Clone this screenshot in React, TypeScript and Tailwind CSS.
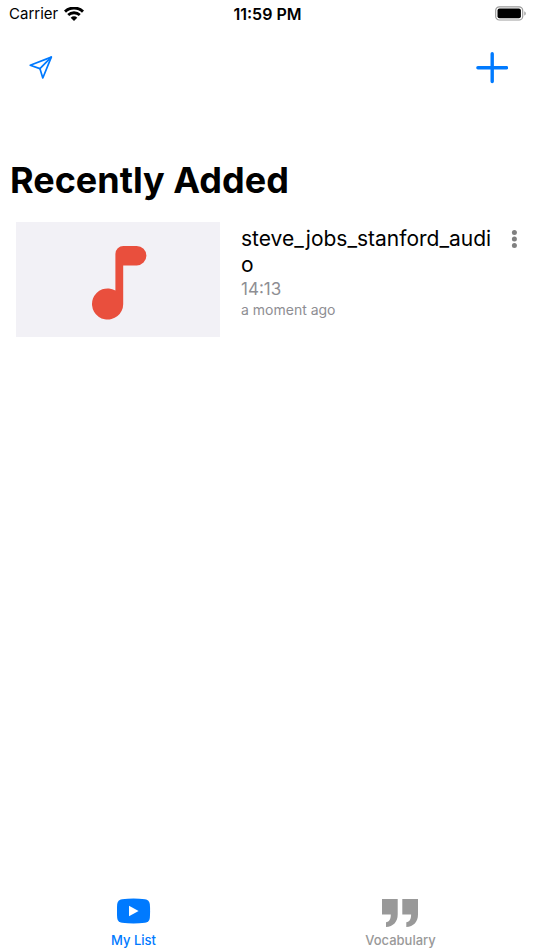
import React from "react";

type MediaItem = { title: string; duration: string; added: string };

const items: MediaItem[] = [
  { title: "steve_jobs_stanford_audio", duration: "14:13", added: "a moment ago" },
];

function StatusBar() {
  return (
    <div className="grid h-7 grid-cols-3 items-center pr-2 pl-[9px] text-[15px] leading-5 text-black">
      <div className="flex items-center gap-1.5">
        <span>Carrier</span>
        <svg width="20" height="15" viewBox="0 0 20 15" fill="none" aria-hidden="true">
          <path d="M1 4.6C6-.2 14-.2 19 4.6" stroke="#000" strokeWidth="2.9" />
          <path d="M4.2 8C7.4 5 12.6 5 15.8 8" stroke="#000" strokeWidth="2.8" />
          <path d="M6.7 10.7C8.6 8.9 11.4 8.9 13.3 10.7L10 14Z" fill="#000" />
        </svg>
      </div>
      <span className="text-center text-[16px] font-semibold">11:59 PM</span>
      <svg className="justify-self-end" width="31" height="16" viewBox="0 0 31 16" aria-hidden="true">
        <rect x=".7" y=".8" width="27" height="13.2" rx="3.6" fill="none" stroke="#9b9b9b" strokeWidth="1.2" />
        <rect x="2.5" y="2.6" width="23.4" height="9.6" rx="2" fill="#000" />
        <path d="M29.3 5.2C31.2 6.1 31.2 8.7 29.3 9.6Z" fill="#9b9b9b" />
      </svg>
    </div>
  );
}

function NavBar() {
  return (
    <header className="flex h-20 items-center justify-between px-6 text-[#007aff]">
      <button type="button" aria-label="Share" className="flex h-8 w-[34px] items-center justify-center">
        <svg width="24" height="24" viewBox="0 0 24 24" fill="none" stroke="currentColor" strokeWidth="1.7" strokeLinejoin="round" strokeLinecap="round">
          <path d="M22.3 1.1L1.2 9.3L10.9 12.6L13.8 22Z" />
          <path d="M22.3 1.1L10.9 12.6" />
        </svg>
      </button>
      <button type="button" aria-label="Add" className="flex size-9 items-center justify-center">
        <svg width="32" height="32" viewBox="0 0 32 32" fill="none" stroke="currentColor" strokeWidth="3.4" strokeLinecap="round">
          <path d="M16.2 1.8V29.6M1.9 15.7H30.5" />
        </svg>
      </button>
    </header>
  );
}

function MediaRow({ item }: { item: MediaItem }) {
  return (
    <li className="flex items-start pr-2 pl-4">
      <div className="flex h-[115px] w-[204px] shrink-0 items-center justify-center bg-[#f2f1f6]">
        <svg width="60" height="82" viewBox="-4 -7 60 82" fill="#e94f3d" aria-hidden="true">
          <path d="M23.4 8A8 8 0 0 1 31.4 0H44.7A9.7 9.7 0 0 1 44.7 19.4H31.2V58.2A15.6 15.6 0 1 1 23.4 44.5Z" />
        </svg>
      </div>
      <div className="ml-[21px] min-w-0 flex-1 pt-1">
        <h2 className="text-[21px] leading-[26px] break-all text-black">{item.title}</h2>
        <p className="text-[17px] leading-[23px] text-[#8e8e93]">{item.duration}</p>
        <p className="text-[14px] leading-[18px] text-[#8e8e93]">{item.added}</p>
      </div>
      <button type="button" aria-label="More options" className="mt-[5px] flex h-6 w-6 shrink-0 items-center justify-center">
        <svg width="6" height="18" viewBox="0 0 6 18" fill="#808080">
          <circle cx="3.4" cy="2.6" r="2.5" />
          <circle cx="3.4" cy="9" r="2.5" />
          <circle cx="3.4" cy="15.4" r="2.5" />
        </svg>
      </button>
    </li>
  );
}

function TabBar() {
  return (
    <nav className="grid h-[60px] grid-cols-2 text-[13px] leading-4 font-medium">
      <button type="button" aria-current="page" className="flex flex-col items-center text-[#007aff]">
        <span className="flex h-[42px] items-center">
          <svg width="34" height="26" viewBox="0 0 34 26" aria-hidden="true">
            <path d="M5 1.2Q16.5-.1 28 1.2Q32.3 1.7 32.8 6Q33.4 13 32.8 20Q32.3 24.3 28 24.8Q16.5 26.1 5 24.8Q.7 24.3 .2 20Q-.4 13 .2 6Q.7 1.7 5 1.2Z" fill="currentColor" />
            <path d="M12 7.8L21.6 13L12 18.2Z" fill="#fff" />
          </svg>
        </span>
        My List
      </button>
      <button type="button" className="flex flex-col items-center text-[#999999]">
        <span className="flex h-[42px] items-center pt-1">
          <svg width="38" height="28" viewBox="1 0 38 28" fill="currentColor" aria-hidden="true">
            <path d="M1 0H16.7V15.5C16.7 23 12.2 27.5 5 28V23.2C8.2 22.8 9.8 20.6 9.8 15.5H1Z" />
            <path d="M21.3 0H37V15.5C37 23 32.5 27.5 25.3 28V23.2C28.5 22.8 30.1 20.6 30.1 15.5H21.3Z" />
          </svg>
        </span>
        Vocabulary
      </button>
    </nav>
  );
}

export default function App() {
  return (
    <div className="flex min-h-screen flex-col bg-white font-['Inter','Liberation_Sans',sans-serif]">
      <StatusBar />
      <NavBar />
      <main className="flex-1 pt-12">
        <h1 className="px-2.5 text-[36px] leading-12 font-bold text-black">Recently Added</h1>
        <ul className="mt-[18px]">
          {items.map((item) => (
            <MediaRow key={item.title} item={item} />
          ))}
        </ul>
      </main>
      <TabBar />
    </div>
  );
}
